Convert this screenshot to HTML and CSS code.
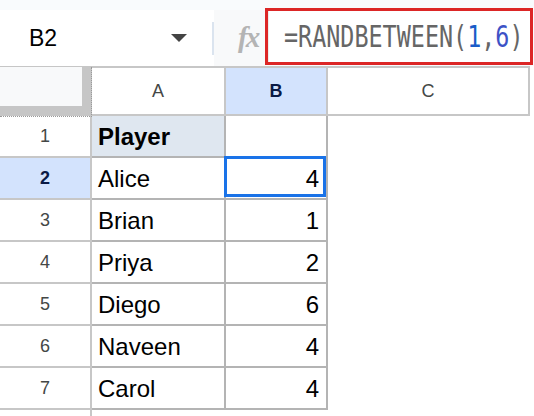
FILE: index.html
```html
<!DOCTYPE html>
<html lang="en">
<head>
    <meta charset="UTF-8">
    <meta name="viewport" content="width=device-width, initial-scale=1.0">
    <title>Sheet - RANDBETWEEN</title>
    <link rel="stylesheet" href="styles.css">
</head>
<body>
    <div class="toolbar">
        <div class="name-box">
            <span class="cell-ref">B2</span>
            <span class="caret"></span>
        </div>
        <div class="divider"></div>
        <div class="fx-area"><span class="fx">fx</span></div>
        <div class="formula-box">
            <span class="formula">=RANDBETWEEN(<span class="arg1">1</span>,<span class="arg2">6</span>)</span>
        </div>
    </div>

    <div class="grid">
        <div class="row header">
            <div class="corner"><div class="corner-inner"></div></div>
            <div class="col-head col-a">A</div>
            <div class="col-head col-b active">B</div>
            <div class="col-head col-c">C</div>
        </div>

        <div class="row">
            <div class="row-head">1</div>
            <div class="cell col-a title">Player</div>
            <div class="cell col-b"></div>
            <div class="blank"></div>
        </div>
        <div class="row">
            <div class="row-head active">2</div>
            <div class="cell col-a">Alice</div>
            <div class="cell col-b num selected">4</div>
            <div class="blank"></div>
        </div>
        <div class="row">
            <div class="row-head">3</div>
            <div class="cell col-a">Brian</div>
            <div class="cell col-b num">1</div>
            <div class="blank"></div>
        </div>
        <div class="row">
            <div class="row-head">4</div>
            <div class="cell col-a">Priya</div>
            <div class="cell col-b num">2</div>
            <div class="blank"></div>
        </div>
        <div class="row">
            <div class="row-head">5</div>
            <div class="cell col-a">Diego</div>
            <div class="cell col-b num">6</div>
            <div class="blank"></div>
        </div>
        <div class="row">
            <div class="row-head">6</div>
            <div class="cell col-a">Naveen</div>
            <div class="cell col-b num">4</div>
            <div class="blank"></div>
        </div>
        <div class="row">
            <div class="row-head">7</div>
            <div class="cell col-a">Carol</div>
            <div class="cell col-b num">4</div>
            <div class="blank"></div>
        </div>
        <div class="row tail">
            <div class="row-head"></div>
        </div>
    </div>
</body>
</html>
```

FILE: styles.css
```css
* {
    box-sizing: border-box;
}
html, body {
    margin: 0;
    padding: 0;
    height: 100%;
    overflow: hidden;
    background-color: #fff;
    font-family: "Liberation Sans", Arial, sans-serif;
    color: #000;
}

/* formula bar */
.toolbar {
    display: flex;
    height: 66px;
    background-color: #f9fbfd;
}
.name-box {
    display: flex;
    align-items: center;
    width: 212px;
    height: 56px;
    margin-top: 10px;
    padding-left: 29px;
    background-color: #fff;
}
.cell-ref {
    font-size: 23px;
    flex: 1;
}
.caret {
    width: 0;
    height: 0;
    margin-right: 25px;
    border-left: 8px solid transparent;
    border-right: 8px solid transparent;
    border-top: 8px solid #444;
}
.divider {
    width: 2px;
    height: 56px;
    margin-top: 10px;
    background: linear-gradient(#fff 12px, #dbe4ef 12px, #dbe4ef 45px, #fff 45px);
}
.fx-area {
    display: flex;
    align-items: center;
    width: 51px;
    height: 56px;
    margin-top: 10px;
    padding-left: 24px;
    background-color: #f8f9fa;
}
.fx {
    font-family: "Liberation Serif", "Times New Roman", serif;
    font-style: italic;
    font-weight: bold;
    font-size: 29px;
    color: #b4b4b4;
    letter-spacing: -2px;
    margin-top: -2px;
}
.formula-box {
    display: flex;
    align-items: center;
    width: 268px;
    height: 57px;
    margin-top: 8px;
    padding-left: 16px;
    background-color: #fff;
    border: 3px solid #dc2626;
    box-shadow: inset 14px 0 0 -13px #ececec;
    overflow: hidden;
}
.formula {
    display: inline-block;
    font-family: "DejaVu Sans Mono", "Liberation Mono", monospace;
    font-size: 30px;
    color: #666;
    white-space: nowrap;
    transform: scaleX(0.78);
    transform-origin: left center;
}
.arg1 {
    color: #1a5cc8;
}
.arg2 {
    color: #3d52c6;
}

/* sheet grid */
.row {
    display: flex;
    height: 42px;
}
.row.header {
    height: 50px;
}
.row.tail {
    height: 8px;
}
.corner {
    width: 92px;
    height: 50px;
    background-color: #c6c6c6;
    position: relative;
}
.corner-inner {
    width: 82px;
    height: 39px;
    margin-top: 1px;
    background-color: #f8f9fa;
}
.corner::after {
    content: "";
    position: absolute;
    left: 0;
    top: 1px;
    width: 91px;
    height: 49px;
    border-right: 1px dotted #9a9a9a;
    border-bottom: 1px dotted #9a9a9a;
}
.col-head {
    display: flex;
    align-items: center;
    justify-content: center;
    font-size: 18px;
    color: #444746;
    background-color: #fff;
    border-top: 2px solid #c7c7c7;
    border-bottom: 2px solid #c7c7c7;
    border-right: 2px solid #c7c7c7;
}
.col-head.active {
    background-color: #d3e3fd;
    color: #0a1a45;
    font-weight: bold;
}
.col-a {
    width: 134px;
}
.col-b {
    width: 102px;
}
.col-c {
    width: 202px;
}
.row-head {
    display: flex;
    align-items: center;
    justify-content: center;
    width: 92px;
    font-size: 18px;
    color: #444746;
    border-right: 2px solid #c7c7c7;
    border-bottom: 2px solid #c7c7c7;
}
.row-head.active {
    background-color: #d3e3fd;
    color: #0a1a45;
    font-weight: bold;
}
.cell {
    display: flex;
    align-items: center;
    padding: 2px 7px 0 6px;
    font-size: 24px;
    border-right: 2px solid #b4b4b4;
    border-bottom: 2px solid #b4b4b4;
}
.cell.title {
    background-color: #dfe7f0;
    font-weight: bold;
}
.cell.num {
    justify-content: flex-end;
}
.cell.selected {
    position: relative;
}
.cell.selected::after {
    content: "";
    position: absolute;
    top: -2px;
    left: -2px;
    right: 0;
    bottom: 1px;
    border: 3px solid #1a73e8;
}
.blank {
    flex: 1;
}
```
